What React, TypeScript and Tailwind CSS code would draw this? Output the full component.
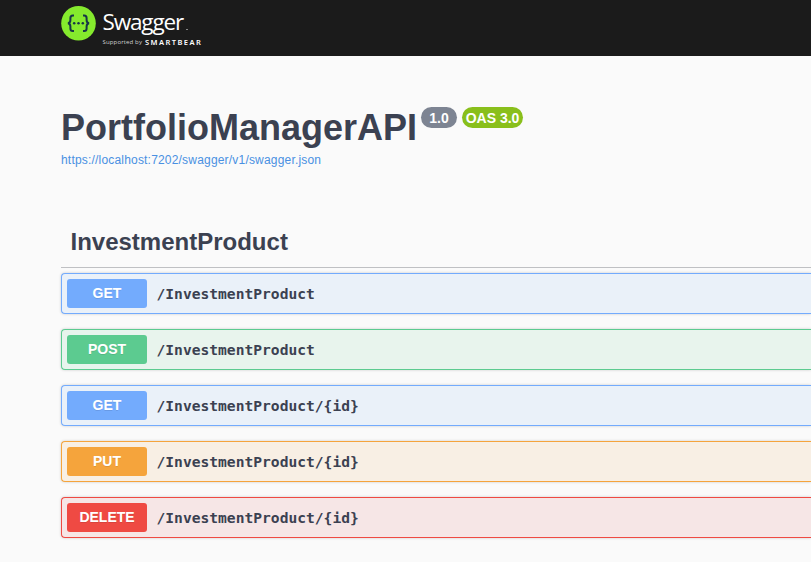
type Operation = {
  method: string;
  path: string;
  row: string;
  badge: string;
};

const operations: Operation[] = [
  { method: "GET", path: "/InvestmentProduct", row: "border-[#73abfd] bg-[#eaf1f9]", badge: "bg-[#73abfd]" },
  { method: "POST", path: "/InvestmentProduct", row: "border-[#5ccb90] bg-[#e8f4ed]", badge: "bg-[#5ccb90]" },
  { method: "GET", path: "/InvestmentProduct/{id}", row: "border-[#73abfd] bg-[#eaf1f9]", badge: "bg-[#73abfd]" },
  { method: "PUT", path: "/InvestmentProduct/{id}", row: "border-[#f5a43c] bg-[#f8efe4]", badge: "bg-[#f5a43c]" },
  { method: "DELETE", path: "/InvestmentProduct/{id}", row: "border-[#ef4a43] bg-[#f6e6e6]", badge: "bg-[#ef4a43]" },
];

function Logo() {
  return (
    <div className="flex text-white">
      <svg className="mt-[6px] h-[35px] w-[35px] shrink-0" viewBox="0 0 35 35" fill="none">
        <circle cx="17.5" cy="17.3" r="17.3" fill="#85ea2d" />
        <g stroke="#173647" strokeWidth="2">
          <path d="M13 9.6h-1.2c-1.8 0-2.4.8-2.4 2.5v2c0 2-.6 3-2.5 3.2 1.9.2 2.5 1.2 2.5 3.2v2c0 1.7.6 2.5 2.4 2.5H13" />
          <path d="M22 9.6h1.2c1.8 0 2.4.8 2.4 2.5v2c0 2 .6 3 2.5 3.2-1.9.2-2.5 1.2-2.5 3.2v2c0 1.7-.6 2.5-2.4 2.5H22" />
        </g>
        <g fill="#173647">
          <circle cx="13.2" cy="17.3" r="1.25" />
          <circle cx="17.5" cy="17.3" r="1.25" />
          <circle cx="21.8" cy="17.3" r="1.25" />
        </g>
      </svg>
      <div className="ml-[6.5px] pt-[8px] font-['Open_Sans',sans-serif]">
        <div className="flex h-[28px] items-end">
          <span className="text-[22.5px] leading-[28px] tracking-[-1.15px]">Swagger</span>
          <span className="mb-[6px] ml-[3px] h-px w-[2px] bg-[#888]" />
        </div>
        <div className="flex h-[12px] items-center whitespace-nowrap leading-[12px]">
          <span className="w-[42.5px] text-[6px] tracking-[0.15px] text-[#d0d0d0]">Supported by</span>
          <span className="font-['Noto_Sans',sans-serif] text-[7.5px] font-semibold tracking-[1.45px]">SMARTBEAR</span>
        </div>
      </div>
    </div>
  );
}

export default function App() {
  return (
    <div className="h-[562px] w-full overflow-hidden bg-[#fafafa] font-['Liberation_Sans',Arial,sans-serif] text-[#3b4151]">
      <header className="h-[56px] bg-[#1b1b1b] pl-[61px]">
        <Logo />
      </header>
      <main className="pl-[61px] pt-[51px]">
        <div className="flex items-start">
          <h1 className="text-[36px] font-bold leading-[42px]">PortfolioManagerAPI</h1>
          <div className="ml-[4px] flex gap-[5px] text-sm font-bold leading-[21px] text-white">
            <span className="h-[21px] w-[36px] rounded-full bg-[#7d8492] pt-px text-center">1.0</span>
            <span className="h-[21px] w-[61px] rounded-full bg-[#89bf1b] pt-px text-center">OAS 3.0</span>
          </div>
        </div>
        <a className="mt-[3px] block text-[12px] leading-[16px] tracking-[0.19px] text-[#4990e2]">
          https://localhost:7202/swagger/v1/swagger.json
        </a>
        <section className="mt-[57px]">
          <h2 className="h-[43px] border-b border-[#bfc0c3] pl-[9.5px] text-[24px] font-bold leading-[33px]">
            InvestmentProduct
          </h2>
          <div className="mt-[5px] flex flex-col gap-[15px]">
            {operations.map((op, i) => (
              <div
                key={i}
                className={`flex h-[41px] items-center rounded-l-[4px] border border-r-0 pl-[5px] shadow-[0_0_3px_rgba(0,0,0,0.19)] ${op.row}`}
              >
                <span
                  className={`h-[29px] w-[80px] rounded-[3px] text-center text-sm font-bold leading-[29px] text-white [text-shadow:0_1px_0_rgba(0,0,0,0.1)] ${op.badge}`}
                >
                  {op.method}
                </span>
                <span className="pl-[9.5px] font-['DejaVu_Sans_Mono',monospace] text-[14.62px] font-bold leading-[20px]">
                  {op.path}
                </span>
              </div>
            ))}
          </div>
        </section>
      </main>
    </div>
  );
}
